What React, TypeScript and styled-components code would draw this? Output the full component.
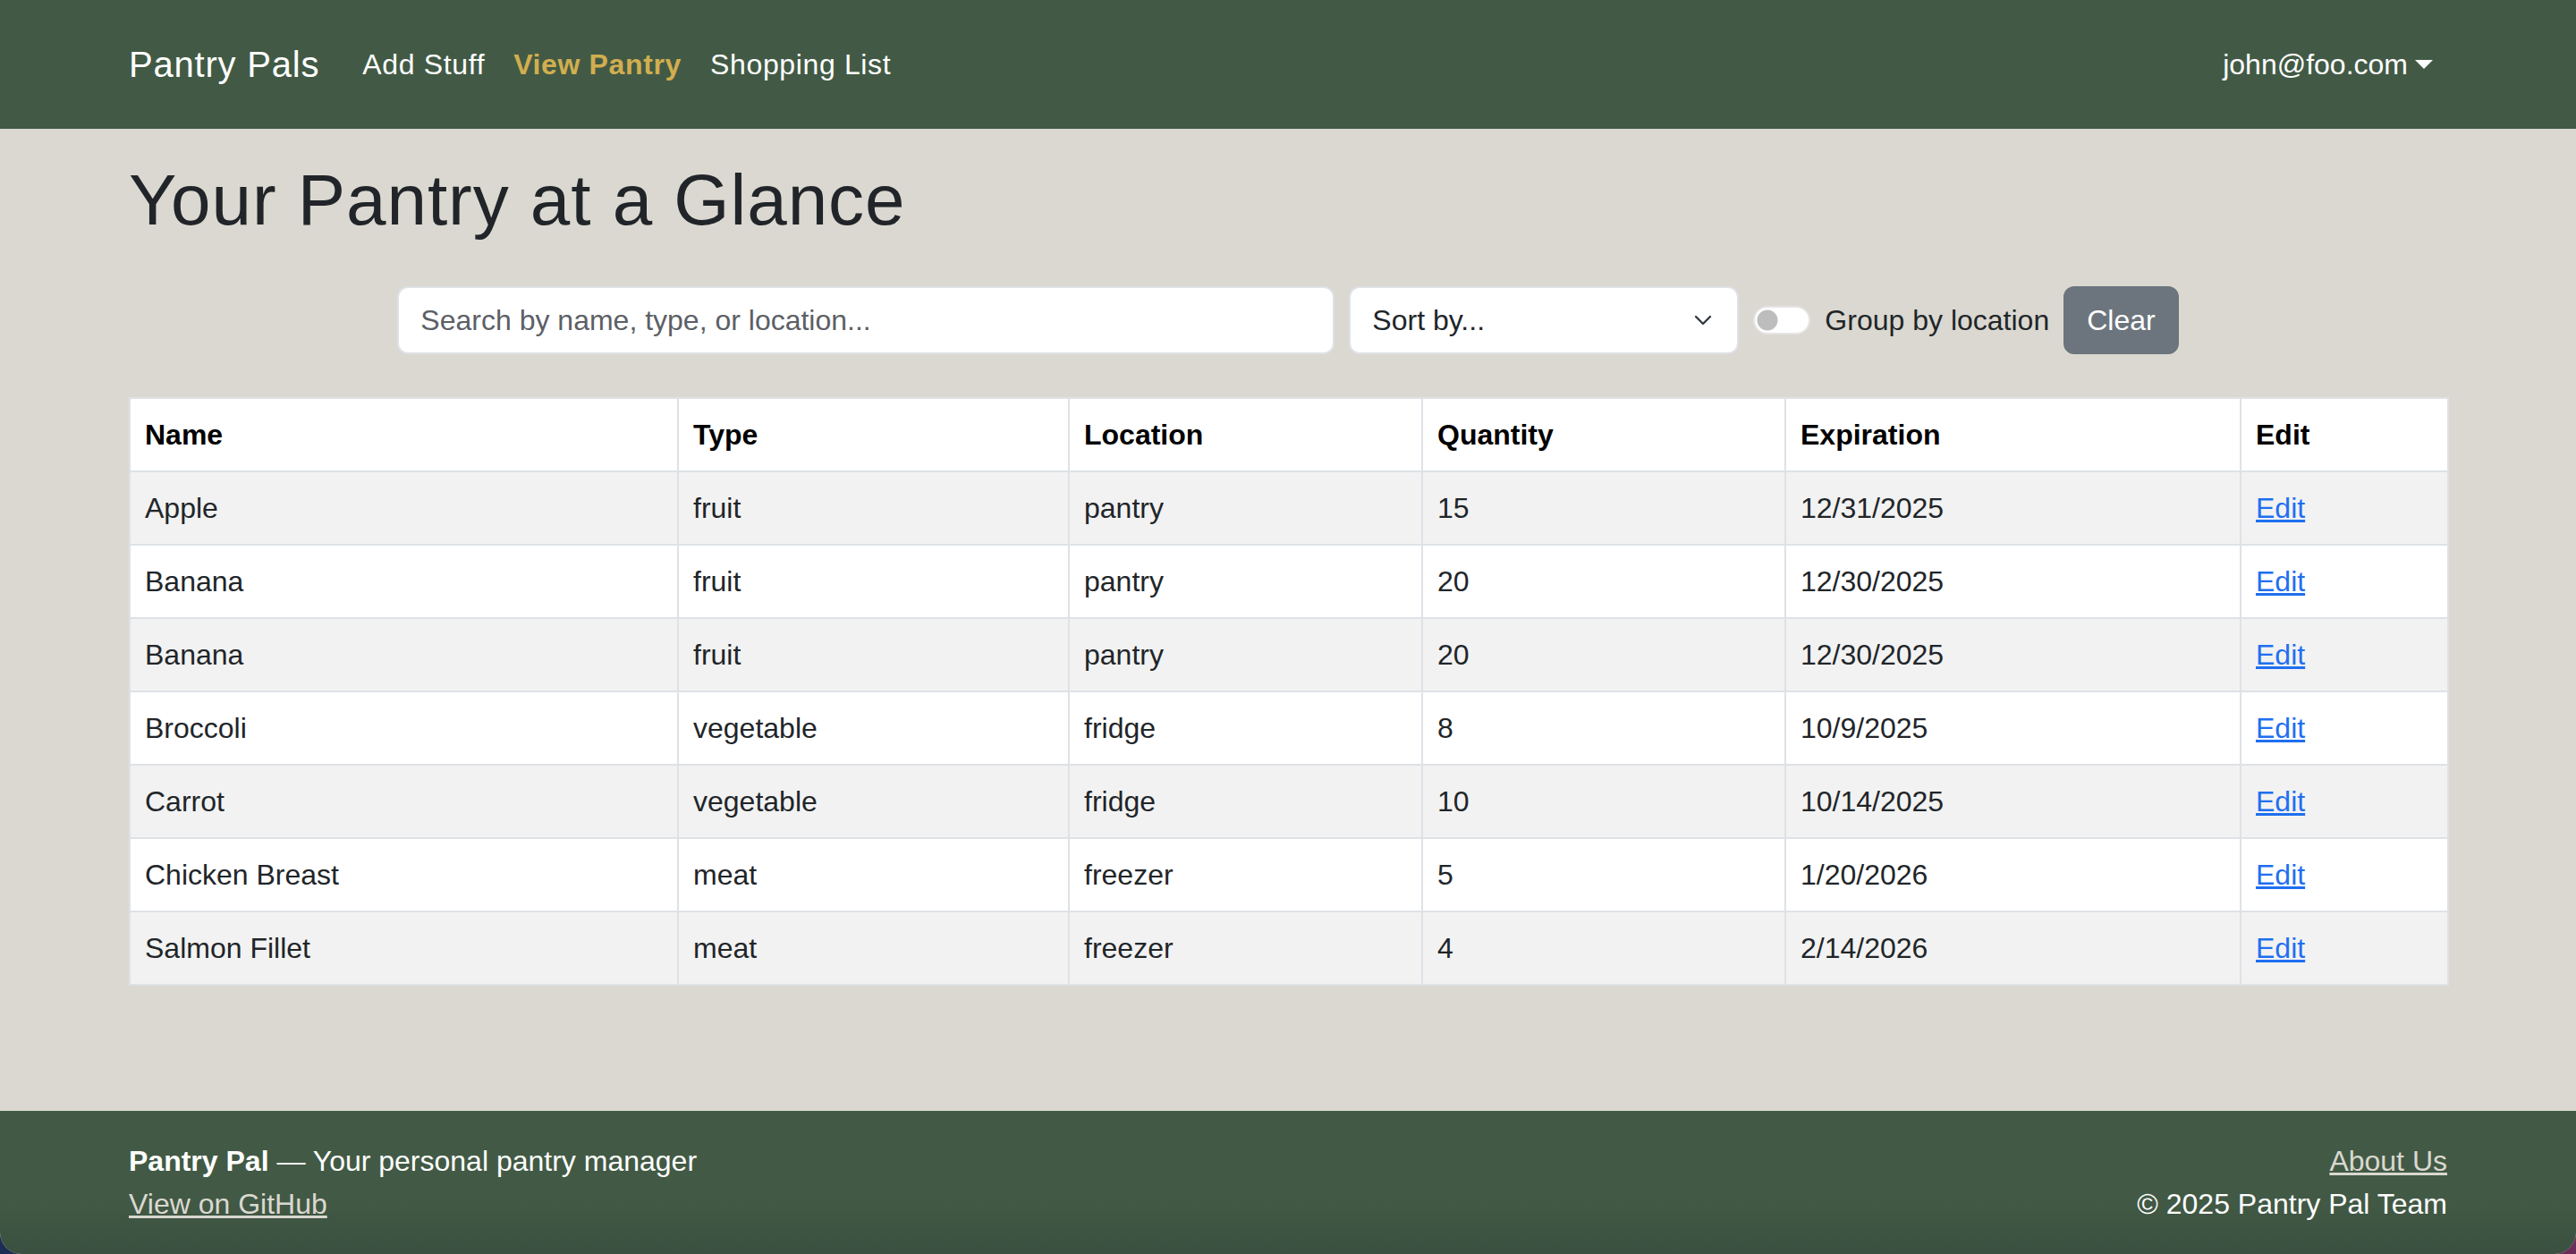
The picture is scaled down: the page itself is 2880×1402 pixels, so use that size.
import React from "react";
import styled, { createGlobalStyle } from "styled-components";

const GlobalStyle = createGlobalStyle`
    html, body {
        margin: 0;
        padding: 0;
    }

    html {
        background: linear-gradient(90deg, #1d2d55 0%, #3a2c58 60%, #6a2d5a 100%);
    }

    body {
        font-family: "Liberation Sans", Arial, sans-serif;
        font-size: 32px;
        line-height: 1.5;
        color: #212529;
    }

    * {
        box-sizing: border-box;
    }
`;

const StyledShell = styled.div`
    min-height: 100vh;
    display: flex;
    flex-direction: column;
    background-color: #dad8d0;
    border-radius: 0 0 24px 24px;
    overflow: hidden;
`;

const StyledContainer = styled.div`
    width: 100%;
    max-width: 2640px;
    margin: 0 auto;
    padding: 0 24px;
`;

const StyledNavbar = styled.nav`
    height: 144px;
    flex-shrink: 0;
    display: flex;
    align-items: center;
    background-color: #425a45;
`;

const StyledNavInner = styled(StyledContainer)`
    display: flex;
    align-items: center;
    justify-content: space-between;
`;

const StyledNavLeft = styled.div`
    display: flex;
    align-items: center;
`;

const StyledBrand = styled.a`
    font-size: 40px;
    letter-spacing: 0.02em;
    color: #ffffff;
    text-decoration: none;
    margin-right: 32px;
    padding: 10px 0;
`;

const StyledNavLink = styled.a<{ $active?: boolean }>`
    padding: 16px;
    letter-spacing: 0.02em;
    color: ${(p) => (p.$active ? "#d1ae4f" : "#ffffff")};
    font-weight: ${(p) => (p.$active ? 700 : 400)};
    text-decoration: none;
`;

const StyledUserMenu = styled.a`
    padding: 16px;
    color: #ffffff;
    text-decoration: none;

    &::after {
        content: "";
        display: inline-block;
        margin-left: 8px;
        vertical-align: 6px;
        border-top: 10px solid #ffffff;
        border-left: 10px solid transparent;
        border-right: 10px solid transparent;
    }
`;

const StyledMain = styled.main`
    flex: 1;
    padding-top: 32px;
`;

const StyledTitle = styled.h1`
    margin: 0 0 48px;
    font-size: 80px;
    font-weight: 500;
    letter-spacing: 0.012em;
    line-height: 1.2;
    color: #212529;
`;

const StyledControls = styled.div`
    display: flex;
    align-items: center;
    justify-content: center;
    gap: 16px;
    margin-bottom: 48px;
`;

const StyledSearch = styled.input`
    width: 1048px;
    height: 76px;
    padding: 12px 24px;
    font-family: inherit;
    font-size: 32px;
    color: #212529;
    background-color: #ffffff;
    border: 2px solid #dee2e6;
    border-radius: 12px;
    outline: none;

    &::placeholder {
        color: #5c6066;
    }
`;

const StyledSelectWrap = styled.div`
    position: relative;
    width: 436px;
`;

const StyledSelect = styled.select`
    width: 100%;
    height: 76px;
    padding: 12px 72px 12px 24px;
    font-family: inherit;
    font-size: 32px;
    color: #212529;
    background-color: #ffffff;
    border: 2px solid #dee2e6;
    border-radius: 12px;
    appearance: none;
    outline: none;
`;

const StyledChevron = styled.svg`
    position: absolute;
    right: 30px;
    top: 32px;
    pointer-events: none;
`;

const StyledSwitch = styled.label`
    display: flex;
    align-items: center;
    gap: 16px;
    color: #212529;
`;

const StyledSwitchInput = styled.input`
    width: 64px;
    height: 32px;
    margin: 0;
    appearance: none;
    border: 2px solid rgba(0, 0, 0, 0.1);
    border-radius: 32px;
    background: radial-gradient(circle at 14px 50%, #bdbdbd 11px, transparent 12px), #ffffff;
`;

const StyledClearButton = styled.button`
    height: 76px;
    padding: 12px 24px;
    font-family: inherit;
    font-size: 32px;
    color: #ffffff;
    background-color: #6c757d;
    border: 2px solid #6c757d;
    border-radius: 12px;
`;

const StyledTable = styled.table`
    width: 100%;
    table-layout: fixed;
    border-collapse: collapse;
    background-color: #ffffff;
    color: #212529;

    & th,
    & td {
        padding: 16px;
        border: 2px solid #dee2e6;
        text-align: left;
        line-height: 48px;
    }

    & th {
        font-weight: 700;
        color: #000000;
    }

    & tbody tr:nth-child(odd) td {
        background-color: #f2f2f2;
    }
`;

const StyledHeadCell = styled.th<{ $width: number }>`
    width: ${(p) => p.$width}px;
`;

const StyledEditLink = styled.a`
    color: #1f6ff0;
    text-decoration: underline;
`;

const StyledFooter = styled.footer`
    flex-shrink: 0;
    padding: 32px 0;
    color: #ffffff;
    background: linear-gradient(180deg, #425a45 0%, #425a45 60%, #3b5040 100%);
`;

const StyledFooterInner = styled(StyledContainer)`
    display: flex;
    justify-content: space-between;
`;

const StyledFooterRight = styled.div`
    text-align: right;
`;

const StyledFooterLink = styled.a`
    color: #dad8d0;
    text-decoration: underline;
`;

const columns = [
    { label: "Name", width: 613 },
    { label: "Type", width: 437 },
    { label: "Location", width: 395 },
    { label: "Quantity", width: 406 },
    { label: "Expiration", width: 509 },
    { label: "Edit", width: 232 },
];

const items = [
    { name: "Apple", type: "fruit", location: "pantry", quantity: 15, expiration: "12/31/2025" },
    { name: "Banana", type: "fruit", location: "pantry", quantity: 20, expiration: "12/30/2025" },
    { name: "Banana", type: "fruit", location: "pantry", quantity: 20, expiration: "12/30/2025" },
    { name: "Broccoli", type: "vegetable", location: "fridge", quantity: 8, expiration: "10/9/2025" },
    { name: "Carrot", type: "vegetable", location: "fridge", quantity: 10, expiration: "10/14/2025" },
    { name: "Chicken Breast", type: "meat", location: "freezer", quantity: 5, expiration: "1/20/2026" },
    { name: "Salmon Fillet", type: "meat", location: "freezer", quantity: 4, expiration: "2/14/2026" },
];

const App = () => {
    const [query, setQuery] = React.useState("");
    const [grouped, setGrouped] = React.useState(false);

    return (
        <>
            <GlobalStyle />
            <StyledShell>
                <StyledNavbar>
                    <StyledNavInner>
                        <StyledNavLeft>
                            <StyledBrand href="#">Pantry Pals</StyledBrand>
                            <StyledNavLink href="#">Add Stuff</StyledNavLink>
                            <StyledNavLink href="#" $active>
                                View Pantry
                            </StyledNavLink>
                            <StyledNavLink href="#">Shopping List</StyledNavLink>
                        </StyledNavLeft>
                        <StyledUserMenu href="#">john@foo.com</StyledUserMenu>
                    </StyledNavInner>
                </StyledNavbar>

                <StyledMain>
                    <StyledContainer>
                        <StyledTitle>Your Pantry at a Glance</StyledTitle>

                        <StyledControls>
                            <StyledSearch
                                placeholder="Search by name, type, or location..."
                                value={query}
                                onChange={(e) => setQuery(e.target.value)}
                            />
                            <StyledSelectWrap>
                                <StyledSelect defaultValue="">
                                    <option value="">Sort by...</option>
                                    <option value="name">Name</option>
                                    <option value="expiration">Expiration</option>
                                </StyledSelect>
                                <StyledChevron width="20" height="12" viewBox="0 0 20 12">
                                    <path d="M2 2 10 10 18 2" fill="none" stroke="#343a40" strokeWidth="2.4" strokeLinecap="round" strokeLinejoin="round" />
                                </StyledChevron>
                            </StyledSelectWrap>
                            <StyledSwitch>
                                <StyledSwitchInput type="checkbox" checked={grouped} onChange={() => setGrouped(!grouped)} />
                                Group by location
                            </StyledSwitch>
                            <StyledClearButton onClick={() => setQuery("")}>Clear</StyledClearButton>
                        </StyledControls>

                        <StyledTable>
                            <thead>
                                <tr>
                                    {columns.map((col) => (
                                        <StyledHeadCell key={col.label} $width={col.width}>
                                            {col.label}
                                        </StyledHeadCell>
                                    ))}
                                </tr>
                            </thead>
                            <tbody>
                                {items.map((item, i) => (
                                    <tr key={i}>
                                        <td>{item.name}</td>
                                        <td>{item.type}</td>
                                        <td>{item.location}</td>
                                        <td>{item.quantity}</td>
                                        <td>{item.expiration}</td>
                                        <td>
                                            <StyledEditLink href="#">Edit</StyledEditLink>
                                        </td>
                                    </tr>
                                ))}
                            </tbody>
                        </StyledTable>
                    </StyledContainer>
                </StyledMain>

                <StyledFooter>
                    <StyledFooterInner>
                        <div>
                            <div>
                                <strong>Pantry Pal</strong> — Your personal pantry manager
                            </div>
                            <StyledFooterLink href="#">View on GitHub</StyledFooterLink>
                        </div>
                        <StyledFooterRight>
                            <div>
                                <StyledFooterLink href="#">About Us</StyledFooterLink>
                            </div>
                            <div>© 2025 Pantry Pal Team</div>
                        </StyledFooterRight>
                    </StyledFooterInner>
                </StyledFooter>
            </StyledShell>
        </>
    );
};

export default App;
